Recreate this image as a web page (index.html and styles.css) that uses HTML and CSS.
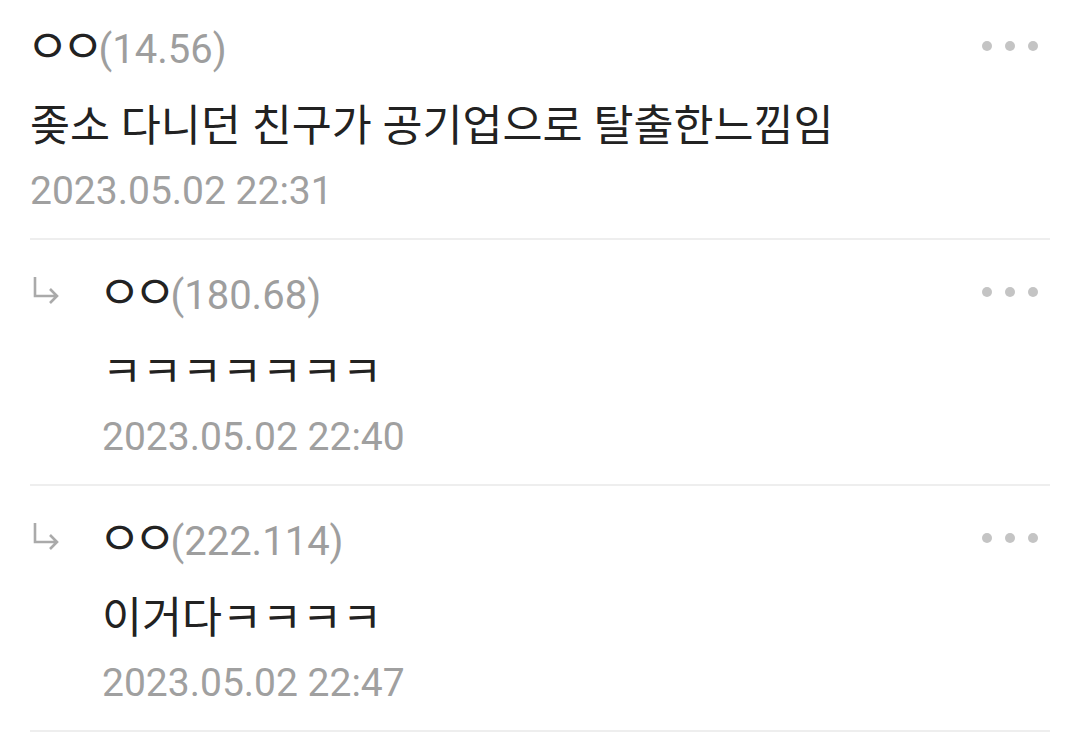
FILE: index.html
```html
<!DOCTYPE html>
<html lang="ko">
<head>
    <meta charset="UTF-8">
    <meta name="viewport" content="width=device-width, initial-scale=1.0">
    <title>댓글</title>
    <link rel="stylesheet" href="styles.css">
</head>
<body>

<div class="commentList">

    <div class="comment">
        <div class="commentBody">
            <div class="nameRow">
                <span class="nick"><span class="nickName">ㅇㅇ</span><span class="ip">(14.56)</span></span>
                <span class="more"><i></i><i></i><i></i></span>
            </div>
            <p class="text">좆소 다니던 친구가 공기업으로 탈출한느낌임</p>
            <p class="date">2023.05.02 22:31</p>
        </div>
    </div>

    <div class="comment reply">
        <div class="replyMark">
            <svg width="30" height="30" viewBox="0 0 30 30">
                <path d="M5 0 V19 H27 M20 12 L27 19 L20 26" fill="none" stroke="#aaaaaa" stroke-width="2.6"/>
            </svg>
        </div>
        <div class="commentBody">
            <div class="nameRow">
                <span class="nick"><span class="nickName">ㅇㅇ</span><span class="ip">(180.68)</span></span>
                <span class="more"><i></i><i></i><i></i></span>
            </div>
            <p class="text">ㅋㅋㅋㅋㅋㅋㅋ</p>
            <p class="date">2023.05.02 22:40</p>
        </div>
    </div>

    <div class="comment reply">
        <div class="replyMark">
            <svg width="30" height="30" viewBox="0 0 30 30">
                <path d="M5 0 V19 H27 M20 12 L27 19 L20 26" fill="none" stroke="#aaaaaa" stroke-width="2.6"/>
            </svg>
        </div>
        <div class="commentBody">
            <div class="nameRow">
                <span class="nick"><span class="nickName">ㅇㅇ</span><span class="ip">(222.114)</span></span>
                <span class="more"><i></i><i></i><i></i></span>
            </div>
            <p class="text">이거다ㅋㅋㅋㅋ</p>
            <p class="date">2023.05.02 22:47</p>
        </div>
    </div>

</div>

</body>
</html>
```

FILE: styles.css
```css
body {
    margin: 0;
    background-color: #FFFFFF;
    font-family: Roboto, "Noto Sans CJK KR", sans-serif;
    color: #222222;
}

.commentList {
    margin: -6px 30px 0 30px;
}

.comment {
    display: flex;
    padding: 22px 0;
    border-bottom: 2px solid #EEEEEE;
}

.replyMark {
    width: 72px;
    flex-shrink: 0;
    height: 60px;
    display: flex;
    align-items: center;
}

.commentBody {
    flex: 1;
}

.nameRow {
    display: flex;
    justify-content: space-between;
    align-items: center;
    height: 60px;
}

.nick {
    font-size: 40px;
    line-height: 60px;
    white-space: nowrap;
}

.nickName {
    font-family: "Noto Sans CJK KR", sans-serif;
    font-size: 47px;
    letter-spacing: -8px;
    margin-left: -4px;
}

.ip {
    color: #9E9E9E;
    margin-left: 2px;
}

.more {
    display: flex;
    gap: 13px;
    margin-right: 12px;
}

.more i {
    width: 10px;
    height: 10px;
    border-radius: 50%;
    background-color: #C4C4C4;
}

.text {
    margin: 11px 0 0 0;
    font-size: 43.5px;
    line-height: 80px;
}

.date {
    margin: 0;
    font-size: 39px;
    line-height: 49px;
    color: #A0A0A0;
}
```
